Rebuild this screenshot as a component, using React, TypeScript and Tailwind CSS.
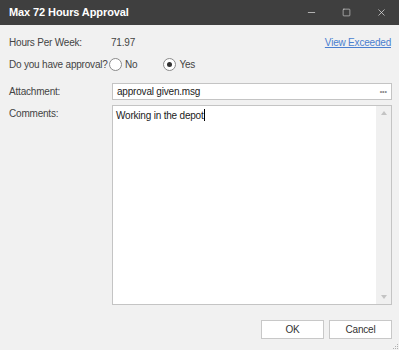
import { Minus, Square, X } from 'lucide-react';

const font = { fontFamily: '"Liberation Sans", Arial, sans-serif' };

function Radio({ label, checked }: { label: string; checked?: boolean }) {
  return (
    <label className="flex shrink-0 items-center gap-[3px]">
      <span className="flex h-[13px] w-[13px] items-center justify-center rounded-full border border-[#8a8a8a] bg-white">
        {checked && <span className="h-[5px] w-[5px] rounded-full bg-[#333]" />}
      </span>
      <span>{label}</span>
    </label>
  );
}

export default function App() {
  return (
    <div style={font} className="flex h-[350px] w-[399px] flex-col whitespace-nowrap bg-[#f1f1f1] text-[10px] tracking-[-0.2px] text-[#444]">
      <div className="flex h-[25px] items-center justify-between bg-[#3f3f3f] pl-[9px] pr-[12px] text-white">
        <span className="text-[11px] font-bold tracking-[-0.1px]">Max 72 Hours Approval</span>
        <div className="flex items-center gap-[25px] text-[#e6e6e6]">
          <Minus size={11} strokeWidth={1.5} />
          <Square size={9} strokeWidth={1.5} />
          <X size={11} strokeWidth={1.5} />
        </div>
      </div>

      <div className="relative flex flex-1 flex-col px-[7px]">
        <div className="mt-[9px] flex h-[16px] items-center pl-[2px]">
          <span className="w-[102px] shrink-0">Hours Per Week:</span>
          <span>71.97</span>
          <a className="ml-auto mr-[1px] text-[#4a7fd0] underline">View Exceeded</a>
        </div>

        <div className="mt-[6px] flex h-[16px] items-center pl-[2px]">
          <span className="w-[100px] shrink-0">Do you have approval?</span>
          <div className="flex items-center gap-[26px]">
            <Radio label="No" />
            <Radio label="Yes" checked />
          </div>
        </div>

        <div className="mt-[11px] flex items-center pl-[2px]">
          <span className="w-[103px] shrink-0">Attachment:</span>
          <div className="flex h-[17px] flex-1 items-center border border-[#c4c4c4] bg-white pl-[4px] pr-[4px] text-[#222]">
            <span>approval given.msg</span>
            <span className="ml-auto text-[7px] leading-none tracking-[0px] text-[#888]">•••</span>
          </div>
        </div>

        <div className="mt-[5px] flex pl-[2px]">
          <span className="w-[103px] shrink-0 pt-[1px]">Comments:</span>
          <div className="flex h-[200px] flex-1 border border-[#c4c4c4] bg-white">
            <div className="flex-1 pl-[3px] pt-[1px] text-[#222]">
              Working in the depot<span className="inline-block h-[12px] w-[1px] translate-y-[2px] bg-black" />
            </div>
            <div className="flex w-[15px] flex-col items-center justify-between bg-[#f0f0f0] py-[5px]">
              <span className="h-0 w-0 border-x-[3.5px] border-b-[4px] border-x-transparent border-b-[#c3c3c3]" />
              <span className="h-0 w-0 border-x-[3.5px] border-t-[4px] border-x-transparent border-t-[#c3c3c3]" />
            </div>
          </div>
        </div>

        <div className="mt-[15px] flex justify-end gap-[5px]">
          <button className="h-[19px] w-[63px] border border-[#c8c8c8] bg-white text-[#333]">OK</button>
          <button className="h-[19px] w-[63px] border border-[#c8c8c8] bg-white text-[#333]">Cancel</button>
        </div>

        <div className="absolute bottom-[1px] right-[1px] grid grid-cols-3 gap-[1px]">
          <span />
          <span />
          <span className="h-[1px] w-[1px] bg-[#b0b0b0]" />
          <span />
          <span className="h-[1px] w-[1px] bg-[#b0b0b0]" />
          <span className="h-[1px] w-[1px] bg-[#b0b0b0]" />
          <span className="h-[1px] w-[1px] bg-[#b0b0b0]" />
          <span className="h-[1px] w-[1px] bg-[#b0b0b0]" />
          <span className="h-[1px] w-[1px] bg-[#b0b0b0]" />
        </div>
      </div>
    </div>
  );
}
